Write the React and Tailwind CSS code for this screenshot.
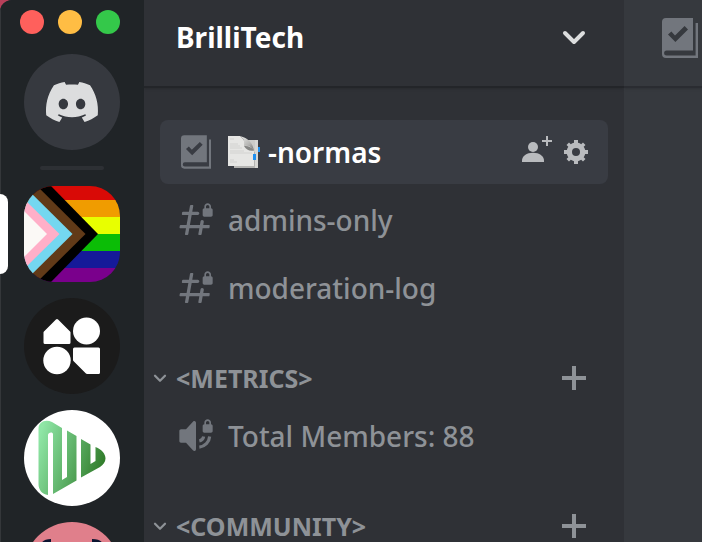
import React from "react";

const lockPath =
  "M21.025 5V4C21.025 2.88 20.05 2 19 2C17.95 2 17 2.88 17 4V5C16.4477 5 16 5.44772 16 6V9C16 9.55228 16.4477 10 17 10H19H21C21.5523 10 22 9.55228 22 9V5.975C22 5.43652 21.5635 5 21.025 5ZM20 5H18V4C18 3.42857 18.4667 3 19 3C19.5333 3 20 3.42857 20 4V5Z";

function DiscordLogo() {
  return (
    <svg className="w-14 h-10" viewBox="0 0 28 20" fill="#dcddde" aria-hidden="true">
      <path d="M23.0212 1.67671C21.3107 0.879656 19.5079 0.318797 17.6584 0C17.4062 0.461742 17.1749 0.934541 16.9708 1.4184C15.003 1.12145 12.9974 1.12145 11.0283 1.4184C10.819 0.934541 10.589 0.461744 10.3368 0.00546311C8.48074 0.324393 6.67795 0.885118 4.96746 1.68231C1.56727 6.77853 0.649666 11.7538 1.11108 16.652C3.10102 18.1418 5.3262 19.2743 7.69177 20C8.22338 19.2743 8.69519 18.4993 9.09812 17.691C8.32996 17.3997 7.58522 17.0424 6.87684 16.6135C7.06531 16.4762 7.24726 16.3387 7.42403 16.1847C11.5911 18.1749 16.408 18.1749 20.5763 16.1847C20.7531 16.3332 20.9351 16.4762 21.1171 16.6135C20.41 17.0369 19.6639 17.3997 18.897 17.691C19.3052 18.4993 19.7718 19.2689 20.3021 19.9945C22.6677 19.2689 24.8929 18.1364 26.8828 16.6466H26.8893C27.43 10.9731 25.9665 6.04728 23.0212 1.67671ZM9.68041 13.6383C8.39754 13.6383 7.34085 12.4453 7.34085 10.994C7.34085 9.54272 8.37155 8.34973 9.68041 8.34973C10.9893 8.34973 12.0395 9.54272 12.0187 10.994C12.0187 12.4453 10.9828 13.6383 9.68041 13.6383ZM18.3161 13.6383C17.0332 13.6383 15.9765 12.4453 15.9765 10.994C15.9765 9.54272 17.0124 8.34973 18.3161 8.34973C19.6184 8.34973 20.6751 9.54272 20.6543 10.994C20.6543 12.4453 19.6184 13.6383 18.3161 13.6383Z" />
    </svg>
  );
}

function PrideFlag() {
  return (
    <svg className="size-24" viewBox="0 0 96 96" aria-hidden="true">
      <rect width="96" height="15" fill="#d90a06" />
      <rect y="14" width="96" height="18" fill="#f09c00" />
      <rect y="31" width="96" height="18" fill="#e8ff00" />
      <rect y="48" width="96" height="18" fill="#0bbd06" />
      <rect y="65" width="96" height="18" fill="#151a99" />
      <rect y="82" width="96" height="14" fill="#7a008c" />
      <path d="M0 0H27L74 48L27 96H0Z" fill="#000" />
      <path d="M0 -13L61.500 48L0 109Z" fill="#613a18" />
      <path d="M0 0L48.500 48L0 96Z" fill="#74d7f0" />
      <path d="M0 13L35.500 48L0 83Z" fill="#ffafc8" />
      <path d="M0 25L23 48L0 71Z" fill="#fbf9f6" />
    </svg>
  );
}

function ShapesLogo() {
  return (
    <svg className="size-24" viewBox="0 0 96 96" fill="#fff" stroke="#fff" strokeLinejoin="round" aria-hidden="true">
      <path d="M33 22.500L45 34.500V44.500H21V34.500Z" strokeWidth="3" />
      <circle cx="62.500" cy="33" r="13.500" stroke="none" />
      <circle cx="33" cy="62.500" r="13.700" stroke="none" />
      <path d="M50.500 51H74.500V74.500H63L50.500 62Z" strokeWidth="3" />
    </svg>
  );
}

function GreenLogo() {
  return (
    <svg className="size-24" viewBox="0 0 96 96" aria-hidden="true">
      <defs>
        <linearGradient id="leaf" x1="14" y1="30" x2="82" y2="52" gradientUnits="userSpaceOnUse">
          <stop offset="0" stopColor="#8fe6a6" />
          <stop offset="0.5" stopColor="#5fb269" />
          <stop offset="1" stopColor="#2f7a28" />
        </linearGradient>
      </defs>
      <g fill="url(#leaf)">
        <path d="M24 85C18 84 14.500 80 14.500 74V19C14.500 12 21 9 28 12L38 18V70L43 67V20.500L52.500 26V70.500L29 84V24C29 21.500 24 22 24 25Z" />
        <path d="M57 29L66.500 34.500V54L71.500 51V37C78 39.500 81.500 44 81.500 48.500C81.500 52 79 55 76 57L57 67.500Z" />
      </g>
    </svg>
  );
}

function PinkAvatar() {
  return (
    <svg className="size-24" viewBox="0 0 96 96" aria-hidden="true">
      <rect width="96" height="96" fill="#e07f8b" />
      <path d="M17 24C17 19 21 17 27 17V30H17Z" fill="#0b1430" />
      <path d="M79 24C79 19 75 17 68 17V30H79Z" fill="#0b1430" />
    </svg>
  );
}

function RulesIcon({ className }) {
  return (
    <svg className={className} viewBox="0 0 24 24" fill="#72767d" aria-hidden="true">
      <path
        fillRule="evenodd"
        d="M5 2H18.500V18.200H5.300a1.250 1.250 0 0 0 0 2.500H19.800V4.500H21V22H5a2 2 0 0 1-2-2V4a2 2 0 0 1 2-2ZM6 10.200L9.700 14L16 7.700L14.300 6L9.500 10.700L7.700 8.700Z"
      />
    </svg>
  );
}

function LockedHashIcon() {
  return (
    <svg className="size-10 shrink-0" viewBox="0 0 24 24" fill="#72767d" aria-hidden="true">
      <path d="M14 8C14 7.44772 13.5523 7 13 7H9.76001L10.3657 3.58738C10.4201 3.28107 10.1845 3 9.87344 3H8.88907C8.64664 3 8.43914 3.17391 8.39677 3.41262L7.76001 7H4.18011C3.93722 7 3.72946 7.17456 3.68759 7.41381L3.51259 8.41381C3.45905 8.71977 3.69449 9 4.00511 9H7.41001L6.35001 15H2.77011C2.52722 15 2.31946 15.1746 2.27759 15.4138L2.10259 16.4138C2.04905 16.7198 2.28449 17 2.59511 17H6.00001L5.39427 20.4126C5.3399 20.7189 5.57547 21 5.88657 21H6.87094C7.11337 21 7.32088 20.8261 7.36325 20.5874L8.00001 17H14L13.3943 20.4126C13.3399 20.7189 13.5755 21 13.8866 21H14.8709C15.1134 21 15.3209 20.8261 15.3632 20.5874L16 17H19.5799C19.8228 17 20.0306 16.8254 20.0724 16.5862L20.2474 15.5862C20.301 15.2802 20.0655 15 19.7549 15H16.35L16.6758 13.1558C16.7823 12.5529 16.3186 12 15.7063 12C15.2286 12 14.8199 12.3429 14.7368 12.8133L14.3504 15H8.35045L9.41045 9H13C13.5523 9 14 8.55228 14 8Z" />
      <path d={lockPath} />
    </svg>
  );
}

function LockedVoiceIcon() {
  return (
    <svg className="size-10 shrink-0" viewBox="0 0 24 24" fill="#72767d" aria-hidden="true">
      <path d="M11.383 3.079C11.009 2.925 10.579 3.010 10.293 3.296L6 8.002H3C2.450 8.002 2 8.453 2 9.002V15.002C2 15.552 2.450 16.002 3 16.002H6L10.293 20.710C10.579 20.996 11.009 21.082 11.383 20.927C11.757 20.772 12 20.407 12 20.002V4.002C12 3.599 11.757 3.232 11.383 3.079Z" />
      <path d={lockPath} />
      <path d="M14 15A3.400 3.400 0 0 0 16.600 12.300M14 18.700A7 7 0 0 0 20.200 12.300" fill="none" stroke="#72767d" strokeWidth="1.900" />
    </svg>
  );
}

function BookmarkTabs() {
  return (
    <svg className="size-8 shrink-0" viewBox="0 0 32 32" role="img" aria-label="bookmark tabs">
      <defs>
        <linearGradient id="curl" x1="14" y1="2" x2="24" y2="14" gradientUnits="userSpaceOnUse">
          <stop offset="0" stopColor="#dededc" />
          <stop offset="0.6" stopColor="#b4b4b2" />
          <stop offset="1" stopColor="#7d7e7c" />
        </linearGradient>
      </defs>
      <path d="M6 4H30V32H6Z" fill="#b4b4b2" />
      <path d="M16 4H27V16H16Z" fill="#cbcbc8" />
      <path d="M27 4H30V32H27Z" fill="#d6d6d3" />
      <path d="M0 0H12C16 3 17 6 16 10C21 9 24 11 26 15V30H0Z" fill="#e6e6e4" />
      <path d="M12 0C20 2 25 7 26 15C24 11 21 9 16 10C17 6 16 3 12 0Z" fill="url(#curl)" />
      <path d="M16 10C20 9.500 24 11 26 14.500C22 15.500 18 14 16 10Z" fill="#858684" />
      <path d="M2 3H6M2 8H10M2 10H12M2 12H14M2 15H16M2 17H24M2 24H6M2 26H9" stroke="#d2d2d0" />
      <path d="M30 11H32V16H30ZM25 18H28V24H25Z" fill="#1e90f0" />
    </svg>
  );
}

function Chevron({ className, stroke, width }) {
  return (
    <svg className={className} viewBox="0 0 36 36" fill="none" stroke={stroke} strokeWidth={width} strokeLinecap="round" strokeLinejoin="round" aria-hidden="true">
      <path d="M9 14L18 23L27 14" />
    </svg>
  );
}

function Server({ label, active, shape, children }) {
  return (
    <div className="relative flex w-full justify-center">
      {active && <span className="absolute left-0 top-2 h-20 w-2 rounded-r-lg bg-white" />}
      <button aria-label={label} className={`flex size-24 shrink-0 items-center justify-center overflow-hidden ${shape}`}>
        {children}
      </button>
    </div>
  );
}

function Channel({ icon, name, emoji, selected }) {
  return (
    <div className={`flex h-16 items-center rounded-lg px-4 ${selected ? "bg-[#393c43] text-white" : "text-[#8e9297]"}`}>
      <a href="#" className="flex min-w-0 flex-1 items-center gap-3">
        {icon}
        <span className={`flex min-w-0 items-center gap-2 whitespace-nowrap text-[28px] leading-10 ${selected ? "font-semibold" : "font-medium"}`}>
          {emoji}
          <span>{name}</span>
        </span>
      </a>
      {selected && (
        <div className="flex gap-2 text-[#b9bbbe]">
          <button aria-label="Create invite">
            <svg className="size-8" viewBox="0 0 16 16" fill="currentColor" aria-hidden="true">
              <path d="M14 2H16V3H14V5H13V3H11V2H13V0H14V2Z" />
              <circle cx="6.500" cy="5.500" r="2.500" />
              <path d="M6.500 8.340C3.260 8.340 1 9.980 1 12.340V13H12V12.340C12 9.980 9.740 8.340 6.500 8.340Z" />
            </svg>
          </button>
          <button aria-label="Edit channel">
            <svg className="size-8" viewBox="0 0 16 16" fill="currentColor" aria-hidden="true">
              <path
                fillRule="evenodd"
                d="M14 7V9H12.573C12.420 9.587 12.173 10.127 11.840 10.607L12.740 11.507L11.493 12.740L10.600 11.847C10.120 12.180 9.587 12.413 9 12.573V14H7V12.580C6.413 12.420 5.880 12.180 5.400 11.853L4.500 12.753L3.253 11.507L4.153 10.607C3.827 10.127 3.580 9.593 3.427 9H2V7H3.427C3.580 6.420 3.827 5.887 4.153 5.400L3.253 4.500L4.500 3.253L5.400 4.153C5.880 3.827 6.413 3.580 7 3.427V2H9V3.427C9.587 3.580 10.120 3.827 10.600 4.153L11.493 3.253L12.740 4.500L11.840 5.400C12.173 5.880 12.420 6.413 12.573 7ZM8 10A2 2 0 1 0 8 6A2 2 0 0 0 8 10Z"
              />
            </svg>
          </button>
        </div>
      )}
    </div>
  );
}

function Category({ name }) {
  return (
    <div className="mt-8 flex h-[52px] items-center pl-[6px] pr-8 text-[#8e9297]">
      <button className="flex flex-1 items-center gap-[6px] text-left text-[25px] font-bold leading-9">
        <Chevron className="size-5 shrink-0" stroke="#8e9297" width="4" />
        <span>{name}</span>
      </button>
      <button aria-label={`Create channel in ${name}`}>
        <svg className="size-9" viewBox="0 0 36 36" fill="none" stroke="currentColor" strokeWidth="4" aria-hidden="true">
          <path d="M18 6V30M6 18H30" />
        </svg>
      </button>
    </div>
  );
}

export default function App() {
  return (
    <div className="h-screen bg-[#b8405a] font-['Noto_Sans','Open_Sans',sans-serif]">
      <div className="flex h-full overflow-hidden rounded-tl-xl bg-[#2f3136]">
        <nav aria-label="Servers" className="flex w-36 shrink-0 flex-col gap-5 overflow-hidden bg-[#202427] pt-[10px] shadow-[inset_1px_0_0_#34373a]">
          <div className="flex gap-[14px] pl-5">
            <button aria-label="Close" className="size-6 rounded-full bg-[#ff605c]" />
            <button aria-label="Minimize" className="size-6 rounded-full bg-[#ffbd44]" />
            <button aria-label="Zoom" className="size-6 rounded-full bg-[#34c84a]" />
          </div>
          <div className="flex flex-col items-center gap-4">
            <Server label="Home" shape="rounded-full bg-[#36393f]">
              <DiscordLogo />
            </Server>
            <div className="h-1 w-16 rounded-full bg-[#2d3034]" />
            <Server label="BrilliTech" active shape="rounded-[30px]">
              <PrideFlag />
            </Server>
            <Server label="Shapes" shape="rounded-full bg-[#1b1b1b]">
              <ShapesLogo />
            </Server>
            <Server label="Green" shape="rounded-full bg-white">
              <GreenLogo />
            </Server>
            <Server label="Pink" shape="rounded-full">
              <PinkAvatar />
            </Server>
          </div>
        </nav>

        <aside className="flex w-[480px] shrink-0 flex-col overflow-hidden">
          <header className="h-[88px] shrink-0 border-b-2 border-[#232529] shadow-sm">
            <button className="flex h-[74px] w-full items-center justify-between px-8 text-left">
              <span className="text-[28px] font-bold leading-10 text-white">BrilliTech</span>
              <Chevron className="size-9" stroke="#dcddde" width="4" />
            </button>
          </header>
          <div className="pt-8">
            <div className="flex flex-col gap-1 px-4">
              <Channel icon={<RulesIcon className="size-10 shrink-0" />} emoji={<BookmarkTabs />} name="-normas" selected />
              <Channel icon={<LockedHashIcon />} name="admins-only" />
              <Channel icon={<LockedHashIcon />} name="moderation-log" />
            </div>
            <Category name="<METRICS>" />
            <div className="px-4">
              <Channel icon={<LockedVoiceIcon />} name="Total Members: 88" />
            </div>
            <Category name="<COMMUNITY>" />
          </div>
        </aside>

        <main className="min-w-0 flex-1 overflow-hidden bg-[#36393e]">
          <div className="h-[88px] border-b-2 border-[#2a2c31] pl-8 shadow-sm">
            <div className="flex h-[76px] items-center">
              <RulesIcon className="size-12 shrink-0" />
            </div>
          </div>
        </main>
      </div>
    </div>
  );
}
